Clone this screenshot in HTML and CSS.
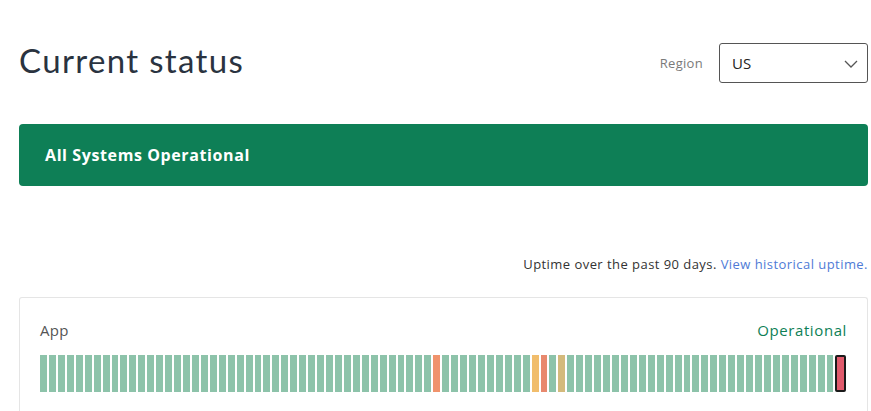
FILE: index.html
```html
<!DOCTYPE html>
<html>
<head>
<meta charset="utf-8">
<link rel="stylesheet" href="styles.css">
</head>
<body>
<div class="page">
  <div class="header">
    <h1 class="title">Current status</h1>
    <div class="region">
      <span class="region-label">Region</span>
      <div class="select">
        <span>US</span>
        <svg class="chev" width="14" height="8" viewBox="0 0 14 8"><path d="M1 1 L7 7 L13 1" fill="none" stroke="#555" stroke-width="1.3"/></svg>
      </div>
    </div>
  </div>
  <div class="banner">All Systems Operational</div>
  <div class="uptime-note">Uptime over the past 90 days. <a href="#">View historical uptime.</a></div>
  <div class="card">
    <div class="row-head">
      <span class="name">App</span>
      <span class="state">Operational</span>
    </div>
    <div class="bars" id="bars"></div>
  </div>
</div>
<script src="script.js"></script>
</body>
</html>
```
FILE: script.js
```js
var special = {44: 'orange', 55: 'yellow', 56: 'red', 58: 'tan', 89: 'last'};
var bars = document.getElementById('bars');
for (var i = 0; i < 90; i++) {
  var d = document.createElement('div');
  d.className = 'bar' + (special[i] ? ' ' + special[i] : '');
  bars.appendChild(d);
}
```
FILE: styles.css
```css
html, body { margin: 0; padding: 0; background: #fff; }
body { font-family: "Open Sans", "Noto Sans", sans-serif; color: #333; }
.page { width: 849px; margin-left: 19px; }
.header { display: flex; justify-content: space-between; align-items: center; height: 72px; padding-top: 27px; box-sizing: content-box; }
.title { margin: 0; font-family: Lato, "Open Sans", sans-serif; font-weight: 400; font-size: 33px; color: #2a3340; letter-spacing: 1.35px; position: relative; top: -3px; }
.region { display: flex; align-items: center; gap: 16px; }
.region-label { font-size: 13px; color: #7a7a7a; letter-spacing: 0.3px; }
.select { height: 38px; border: 1px solid #555; border-radius: 3px; display: flex; align-items: center; justify-content: space-between; padding: 0 9px 0 12px; box-sizing: content-box; width: 126px; font-size: 15px; color: #222; }
.chev { margin-top: 1px; }
.banner { margin-top: 25px; height: 62px; background: #0e7f56; border-radius: 4px; color: #fff; font-weight: 700; font-size: 16px; display: flex; align-items: center; padding-left: 26px; letter-spacing: 0.6px; }
.uptime-note { margin-top: 69px; text-align: right; font-size: 13px; color: #333; letter-spacing: 0.45px; }
.uptime-note a { color: #4f7bd6; text-decoration: none; }
.card { margin-top: 24px; border: 1px solid #e5e5e5; border-bottom: none; border-radius: 3px 3px 0 0; padding: 22px 20px 30px 20px; }
.row-head { display: flex; justify-content: space-between; font-size: 15px; letter-spacing: 0.3px; }
.name { color: #555; }
.state { color: #0e7f56; letter-spacing: 0.6px; }
.bars { margin-top: 15px; display: flex; gap: 2px; height: 37px; }
.bar { flex: 1; background: #8dc3aa; }
.bar.orange { background: #f0936c; }
.bar.yellow { background: #f1bd6c; }
.bar.red { background: #e8896e; }
.bar.tan { background: #d4ba7c; }
.bar.last { background: #e05a6c; border: 2px solid #1a1a1a; border-radius: 2px; }
```
